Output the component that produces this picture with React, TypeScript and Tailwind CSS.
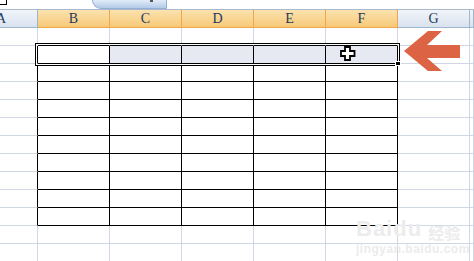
import React from 'react';

const COLS = ['A', 'B', 'C', 'D', 'E', 'F', 'G', ''];
const ROW_COUNT = 13;
// table covers columns B..F and rows 1..10
const inTableCol = (c: number) => c >= 1 && c <= 5;
const inTableRow = (r: number) => r >= 1 && r <= 10;

function colWidth(c: number) {
  if (c === 0) return 'w-[38px]';
  if (c === 7) return 'flex-1';
  return 'w-[72px]';
}

function HeaderCell({ c }: { c: number }) {
  const selected = inTableCol(c);
  return (
    <div
      className={`${colWidth(c)} h-[18px] box-border border-r border-b flex items-center overflow-hidden text-[14px] text-[#1f3b5a] font-['Liberation_Serif',serif] ${
        c === 0 ? 'justify-start' : 'justify-center'
      } ${
        selected
          ? 'bg-gradient-to-b from-[#fbe2ae] to-[#f6c977] border-[#f0a74c]'
          : 'bg-gradient-to-b from-[#f1f5fa] to-[#d9e2ee] border-[#9eb6ce]'
      }`}
    >
      {c === 0 ? <span className="shrink-0 w-[72px] -ml-[35px] text-center">A</span> : COLS[c]}
    </div>
  );
}

function Cell({ r, c }: { r: number; c: number }) {
  const right =
    (c === 0 && inTableRow(r)) || (inTableCol(c) && inTableRow(r))
      ? 'border-r-black'
      : 'border-r-[#d0d7e5]';
  const bottom =
    inTableCol(c) && (inTableRow(r) || r === 0) ? 'border-b-black' : 'border-b-[#d0d7e5]';
  let bg = 'bg-white';
  if (r === 1 && c >= 2 && c <= 5) bg = 'bg-[#e7e9f2]';
  return <div className={`${colWidth(c)} h-[18px] box-border border-r border-b ${right} ${bottom} ${bg}`} />;
}

export default function App() {
  return (
    <div className="relative w-[474px] h-[261px] overflow-hidden bg-white font-['Liberation_Sans',sans-serif]">
      {/* strip above the column headers */}
      <div className="relative h-[10px] border-b border-[#a9b8cc] bg-white">
        <div className="absolute left-0 top-0 w-[7px] h-[5px] border border-black border-t-0 border-l-0 bg-white" />
        <div className="absolute left-[92px] top-0 w-[75px] h-[9px] rounded-bl-[12px] rounded-br-[2px] border-l border-b border-r border-[#93afd4] bg-gradient-to-b from-[#e2ecf8] to-[#b3cbe9]">
          <div className="absolute right-[13px] top-[0px] w-[3px] h-[2px] bg-[#555]" />
        </div>
      </div>

      {/* column headers */}
      <div className="flex">
        {COLS.map((_, c) => (
          <HeaderCell key={c} c={c} />
        ))}
      </div>

      {/* rows */}
      {Array.from({ length: ROW_COUNT }).map((_, r) => (
        <div key={r} className="flex">
          {COLS.map((_, c) => (
            <Cell key={c} r={r} c={c} />
          ))}
        </div>
      ))}

      {/* selection outline over row 1, B..F */}
      <div className="absolute left-[35px] top-[43px] w-[365px] h-[23px] border border-black shadow-[inset_0_0_0_1px_white] pointer-events-none" />
      <div className="absolute left-[395px] top-[61px] w-[6px] h-[5px] bg-black border border-white" />

      {/* cross cursor */}
      <svg className="absolute left-[340px] top-[46px]" width="16" height="15" viewBox="0 0 16 15">
        <path d="M5 1h5v4h4.5v5h-4.5v4h-5v-4h-4v-5h4z" fill="white" stroke="black" strokeWidth="1.8" />
      </svg>

      {/* arrow */}
      <svg className="absolute left-[400px] top-[28px]" width="66" height="46" viewBox="0 0 66 46">
        <polygon points="4,23 28,3 42,3 27,17 60,17 60,30 27,30 42,43 28,43" fill="#dc6444" />
      </svg>

      {/* watermark */}
      <div className="absolute left-[356px] top-[218px] text-[#ececec] leading-none pointer-events-none">
        <div className="flex items-end gap-[6px]">
          <span className="text-[22px] font-bold tracking-[1px]">Baidu</span>
          <span className="text-[16px] font-['Noto_Sans_CJK_SC',sans-serif] font-bold">经验</span>
        </div>
        <div className="mt-[3px] text-[12px] font-bold tracking-[0.5px]">jingyan.baidu.com</div>
      </div>
    </div>
  );
}
